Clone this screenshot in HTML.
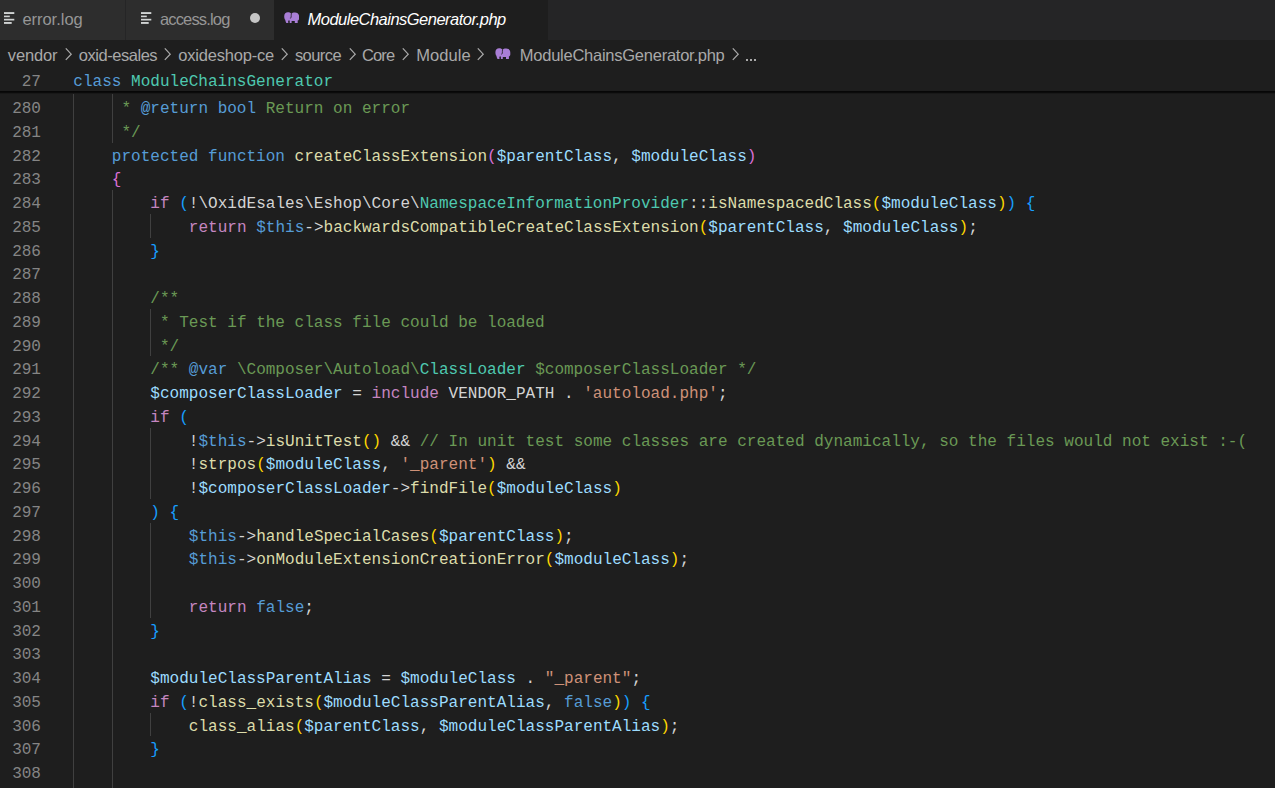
<!DOCTYPE html>
<html><head><meta charset="utf-8"><style>
html,body{margin:0;padding:0;}
body{width:1275px;height:788px;overflow:hidden;background:#1e1e1e;position:relative;font-family:"Liberation Sans",sans-serif;}
.abs{position:absolute;}
.tabbar{position:absolute;left:0;top:0;width:1275px;height:40px;background:#252526;}
.tab{position:absolute;top:0;height:40px;background:#2d2d2d;}
.tab.active{background:#1e1e1e;}
.ui{position:absolute;white-space:pre;font-size:16px;line-height:20px;}
.ic{position:absolute;display:block;}
.code{position:absolute;left:0;white-space:pre;font-family:"Liberation Mono",monospace;font-size:16.04px;height:23.75px;line-height:23.75px;}
.ln{position:absolute;left:0;width:41px;text-align:right;white-space:pre;font-family:"Liberation Mono",monospace;font-size:16.04px;height:23.75px;line-height:23.75px;color:#858585;}
.g{position:absolute;width:1px;background:#404040;}
.chev{position:absolute;}
.kw{color:#569cd6;}
.ctl{color:#c586c0;}
.cls{color:#4ec9b0;}
.fn{color:#dcdcaa;}
.var{color:#9cdcfe;}
.str{color:#ce9178;}
.cmt{color:#6a9955;}
.op{color:#d4d4d4;}
.b1{color:#ffd700;}
.b2{color:#da70d6;}
.b3{color:#179fff;}
</style></head><body>
<div class="tabbar"><div class="tab" style="left:0;width:125px"></div><div class="tab" style="left:126px;width:148px"></div><div class="tab active" style="left:274px;width:274px"></div></div><svg class="ic" style="left:3.8px;top:12px" width="11" height="12" viewBox="0 0 11 12"><rect x="0" y="0.1" width="10.3" height="1.9" fill="#d0d3d3"/><rect x="0" y="3.6" width="5.8" height="1.6" fill="#d0d3d3"/><rect x="0" y="6.8" width="10.3" height="1.7" fill="#d0d3d3"/><rect x="0" y="10.0" width="7.7" height="1.9" fill="#d0d3d3"/></svg><div class="ui" style="left:22.40px;top:9.28px;font-size:16.5px;letter-spacing:-0.027px;color:#969696;">error.log</div><svg class="ic" style="left:141px;top:12px" width="11" height="12" viewBox="0 0 11 12"><rect x="0" y="0.1" width="10.3" height="1.9" fill="#d0d3d3"/><rect x="0" y="3.6" width="5.8" height="1.6" fill="#d0d3d3"/><rect x="0" y="6.8" width="10.3" height="1.7" fill="#d0d3d3"/><rect x="0" y="10.0" width="7.7" height="1.9" fill="#d0d3d3"/></svg><div class="ui" style="left:159.90px;top:9.18px;font-size:16.5px;letter-spacing:-0.829px;color:#969696;">access.log</div><div class="abs" style="left:249.6px;top:12.9px;width:10.6px;height:10.6px;border-radius:50%;background:#c5c5c5"></div><svg class="ic" style="left:284.2px;top:11.8px" width="15.1" height="11.2" viewBox="0 0 15.1 11.2"><path fill="#a97ed6" d="M0.2 4.2 C0.2 1.8 1.8 0.3 3.8 0.3 C5.6 0.3 7 1 7.4 2 C8 1.1 9.2 0.6 11 0.6 C13.4 0.6 15.1 2 15.1 4.4 L15.1 6.6 C15.1 7.5 14.4 8.3 13.7 8.6 L13.7 11.2 L10.8 11.2 L10.8 8.9 L7.6 8.9 L7.6 11.2 L5.7 11.2 L5.7 8.6 L4.4 8.4 C4 9.2 4.2 10.2 4.4 11.2 L2.4 11.2 C1.6 10 1.4 8.8 1.2 7.8 C0.5 7 0.2 5.8 0.2 4.2 Z"/><path fill="none" stroke="#1e1e1e" stroke-width="0.8" d="M7.3 1.6 C7.1 3 7.3 4.5 7.1 5.6 C6.8 6 6.3 6.1 5.9 6.1"/></svg><div class="ui" style="left:307.60px;top:8.78px;font-size:16.5px;letter-spacing:-0.524px;color:#ffffff;font-style:italic;">ModuleChainsGenerator.php</div><div class="ui" style="left:7.80px;top:45.08px;font-size:16.5px;letter-spacing:-0.130px;color:#a9a9a9;">vendor</div><div class="ui" style="left:78.80px;top:45.08px;font-size:16.5px;letter-spacing:-0.465px;color:#a9a9a9;">oxid-esales</div><div class="ui" style="left:178.20px;top:45.08px;font-size:16.5px;letter-spacing:-0.185px;color:#a9a9a9;">oxideshop-ce</div><div class="ui" style="left:294.90px;top:45.08px;font-size:16.5px;letter-spacing:-0.568px;color:#a9a9a9;">source</div><div class="ui" style="left:362.10px;top:45.08px;font-size:16.5px;letter-spacing:-0.921px;color:#a9a9a9;">Core</div><div class="ui" style="left:416.20px;top:45.08px;font-size:16.5px;letter-spacing:0.056px;color:#a9a9a9;">Module</div><div class="ui" style="left:519.80px;top:45.08px;font-size:16.5px;letter-spacing:-0.250px;color:#a9a9a9;">ModuleChainsGenerator.php</div><svg class="ic" style="left:65.1px;top:47.9px" width="8" height="13" viewBox="0 0 8 13"><path d="M0.8 0.4 L6.2 6.15 L0.8 11.9" fill="none" stroke="#a9a9a9" stroke-width="1.25"/></svg><svg class="ic" style="left:164.3px;top:47.9px" width="8" height="13" viewBox="0 0 8 13"><path d="M0.8 0.4 L6.2 6.15 L0.8 11.9" fill="none" stroke="#a9a9a9" stroke-width="1.25"/></svg><svg class="ic" style="left:281.3px;top:47.9px" width="8" height="13" viewBox="0 0 8 13"><path d="M0.8 0.4 L6.2 6.15 L0.8 11.9" fill="none" stroke="#a9a9a9" stroke-width="1.25"/></svg><svg class="ic" style="left:348.6px;top:47.9px" width="8" height="13" viewBox="0 0 8 13"><path d="M0.8 0.4 L6.2 6.15 L0.8 11.9" fill="none" stroke="#a9a9a9" stroke-width="1.25"/></svg><svg class="ic" style="left:402.3px;top:47.9px" width="8" height="13" viewBox="0 0 8 13"><path d="M0.8 0.4 L6.2 6.15 L0.8 11.9" fill="none" stroke="#a9a9a9" stroke-width="1.25"/></svg><svg class="ic" style="left:477.4px;top:47.9px" width="8" height="13" viewBox="0 0 8 13"><path d="M0.8 0.4 L6.2 6.15 L0.8 11.9" fill="none" stroke="#a9a9a9" stroke-width="1.25"/></svg><svg class="ic" style="left:731.8px;top:47.9px" width="8" height="13" viewBox="0 0 8 13"><path d="M0.8 0.4 L6.2 6.15 L0.8 11.9" fill="none" stroke="#a9a9a9" stroke-width="1.25"/></svg><svg class="ic" style="left:495.1px;top:47.8px" width="15.5" height="11.2" viewBox="0 0 15.1 11.2"><path fill="#a97ed6" d="M0.2 4.2 C0.2 1.8 1.8 0.3 3.8 0.3 C5.6 0.3 7 1 7.4 2 C8 1.1 9.2 0.6 11 0.6 C13.4 0.6 15.1 2 15.1 4.4 L15.1 6.6 C15.1 7.5 14.4 8.3 13.7 8.6 L13.7 11.2 L10.8 11.2 L10.8 8.9 L7.6 8.9 L7.6 11.2 L5.7 11.2 L5.7 8.6 L4.4 8.4 C4 9.2 4.2 10.2 4.4 11.2 L2.4 11.2 C1.6 10 1.4 8.8 1.2 7.8 C0.5 7 0.2 5.8 0.2 4.2 Z"/><path fill="none" stroke="#1e1e1e" stroke-width="0.8" d="M7.3 1.6 C7.1 3 7.3 4.5 7.1 5.6 C6.8 6 6.3 6.1 5.9 6.1"/></svg><div class="abs" style="left:745.8px;top:58.6px;width:2.2px;height:2.2px;background:#a9a9a9"></div><div class="abs" style="left:750.05px;top:58.6px;width:2.2px;height:2.2px;background:#a9a9a9"></div><div class="abs" style="left:754.3px;top:58.6px;width:2.2px;height:2.2px;background:#a9a9a9"></div><div class="ln" style="top:74.45px">279</div><div class="ln" style="top:98.20px">280</div><div class="code" style="left:121.42px;top:98.20px"><span class="cmt">* </span><span class="kw">@return</span><span class="cmt"> </span><span class="kw">bool</span><span class="cmt"> Return on error</span></div><div class="ln" style="top:121.95px">281</div><div class="code" style="left:121.42px;top:121.95px"><span class="cmt">*/</span></div><div class="ln" style="top:145.70px">282</div><div class="code" style="left:111.80px;top:145.70px"><span class="kw">protected</span><span class="op"> </span><span class="kw">function</span><span class="op"> </span><span class="fn">createClassExtension</span><span class="b2">(</span><span class="var">$parentClass</span><span class="op">, </span><span class="var">$moduleClass</span><span class="b2">)</span></div><div class="ln" style="top:169.45px">283</div><div class="code" style="left:111.80px;top:169.45px"><span class="b2">{</span></div><div class="ln" style="top:193.20px">284</div><div class="code" style="left:150.30px;top:193.20px"><span class="ctl">if</span><span class="op"> </span><span class="b3">(</span><span class="op">!\OxidEsales\Eshop\Core\</span><span class="cls">NamespaceInformationProvider</span><span class="op">::</span><span class="fn">isNamespacedClass</span><span class="b1">(</span><span class="var">$moduleClass</span><span class="b1">)</span><span class="b3">)</span><span class="op"> </span><span class="b3">{</span></div><div class="ln" style="top:216.95px">285</div><div class="code" style="left:188.80px;top:216.95px"><span class="ctl">return</span><span class="op"> </span><span class="kw">$this</span><span class="op">-&gt;</span><span class="fn">backwardsCompatibleCreateClassExtension</span><span class="b1">(</span><span class="var">$parentClass</span><span class="op">, </span><span class="var">$moduleClass</span><span class="b1">)</span><span class="op">;</span></div><div class="ln" style="top:240.70px">286</div><div class="code" style="left:150.30px;top:240.70px"><span class="b3">}</span></div><div class="ln" style="top:264.45px">287</div><div class="ln" style="top:288.20px">288</div><div class="code" style="left:150.30px;top:288.20px"><span class="cmt">/**</span></div><div class="ln" style="top:311.95px">289</div><div class="code" style="left:159.93px;top:311.95px"><span class="cmt">* Test if the class file could be loaded</span></div><div class="ln" style="top:335.70px">290</div><div class="code" style="left:159.93px;top:335.70px"><span class="cmt">*/</span></div><div class="ln" style="top:359.45px">291</div><div class="code" style="left:150.30px;top:359.45px"><span class="cmt">/** </span><span class="kw">@var</span><span class="cmt"> \Composer\Autoload\</span><span class="cls">ClassLoader</span><span class="cmt"> $composerClassLoader */</span></div><div class="ln" style="top:383.20px">292</div><div class="code" style="left:150.30px;top:383.20px"><span class="var">$composerClassLoader</span><span class="op"> = </span><span class="ctl">include</span><span class="op"> VENDOR_PATH . </span><span class="str">&#x27;autoload.php&#x27;</span><span class="op">;</span></div><div class="ln" style="top:406.95px">293</div><div class="code" style="left:150.30px;top:406.95px"><span class="ctl">if</span><span class="op"> </span><span class="b3">(</span></div><div class="ln" style="top:430.70px">294</div><div class="code" style="left:188.80px;top:430.70px"><span class="op">!</span><span class="kw">$this</span><span class="op">-&gt;</span><span class="fn">isUnitTest</span><span class="b1">()</span><span class="op"> &amp;&amp; </span><span class="cmt">// In unit test some classes are created dynamically, so the files would not exist :-(</span></div><div class="ln" style="top:454.45px">295</div><div class="code" style="left:188.80px;top:454.45px"><span class="op">!</span><span class="fn">strpos</span><span class="b1">(</span><span class="var">$moduleClass</span><span class="op">, </span><span class="str">&#x27;_parent&#x27;</span><span class="b1">)</span><span class="op"> &amp;&amp;</span></div><div class="ln" style="top:478.20px">296</div><div class="code" style="left:188.80px;top:478.20px"><span class="op">!</span><span class="var">$composerClassLoader</span><span class="op">-&gt;</span><span class="fn">findFile</span><span class="b1">(</span><span class="var">$moduleClass</span><span class="b1">)</span></div><div class="ln" style="top:501.95px">297</div><div class="code" style="left:150.30px;top:501.95px"><span class="b3">)</span><span class="op"> </span><span class="b3">{</span></div><div class="ln" style="top:525.70px">298</div><div class="code" style="left:188.80px;top:525.70px"><span class="kw">$this</span><span class="op">-&gt;</span><span class="fn">handleSpecialCases</span><span class="b1">(</span><span class="var">$parentClass</span><span class="b1">)</span><span class="op">;</span></div><div class="ln" style="top:549.45px">299</div><div class="code" style="left:188.80px;top:549.45px"><span class="kw">$this</span><span class="op">-&gt;</span><span class="fn">onModuleExtensionCreationError</span><span class="b1">(</span><span class="var">$moduleClass</span><span class="b1">)</span><span class="op">;</span></div><div class="ln" style="top:573.20px">300</div><div class="ln" style="top:596.95px">301</div><div class="code" style="left:188.80px;top:596.95px"><span class="ctl">return</span><span class="op"> </span><span class="kw">false</span><span class="op">;</span></div><div class="ln" style="top:620.70px">302</div><div class="code" style="left:150.30px;top:620.70px"><span class="b3">}</span></div><div class="ln" style="top:644.45px">303</div><div class="ln" style="top:668.20px">304</div><div class="code" style="left:150.30px;top:668.20px"><span class="var">$moduleClassParentAlias</span><span class="op"> = </span><span class="var">$moduleClass</span><span class="op"> . </span><span class="str">&quot;_parent&quot;</span><span class="op">;</span></div><div class="ln" style="top:691.95px">305</div><div class="code" style="left:150.30px;top:691.95px"><span class="ctl">if</span><span class="op"> </span><span class="b3">(</span><span class="op">!</span><span class="fn">class_exists</span><span class="b1">(</span><span class="var">$moduleClassParentAlias</span><span class="op">, </span><span class="kw">false</span><span class="b1">)</span><span class="b3">)</span><span class="op"> </span><span class="b3">{</span></div><div class="ln" style="top:715.70px">306</div><div class="code" style="left:188.80px;top:715.70px"><span class="fn">class_alias</span><span class="b1">(</span><span class="var">$parentClass</span><span class="op">, </span><span class="var">$moduleClassParentAlias</span><span class="b1">)</span><span class="op">;</span></div><div class="ln" style="top:739.45px">307</div><div class="code" style="left:150.30px;top:739.45px"><span class="b3">}</span></div><div class="ln" style="top:763.20px">308</div><div class="g" style="left:73.30px;top:91.75px;height:696.25px"></div><div class="g" style="left:111.80px;top:91.75px;height:50.95px"></div><div class="g" style="left:111.80px;top:190.20px;height:597.80px"></div><div class="g" style="left:150.30px;top:213.95px;height:23.75px"></div><div class="g" style="left:150.30px;top:308.95px;height:47.50px"></div><div class="g" style="left:150.30px;top:427.70px;height:71.25px"></div><div class="g" style="left:150.30px;top:522.70px;height:95.00px"></div><div class="g" style="left:150.30px;top:712.70px;height:23.75px"></div><div class="abs" style="left:0;top:68px;width:1275px;height:23px;background:#1e1e1e"></div><div class="abs" style="left:0;top:91px;width:1275px;height:1px;background:#070707"></div><div class="abs" style="left:0;top:92px;width:1275px;height:1px;background:#0b0b0b"></div><div class="abs" style="left:0;top:93px;width:1275px;height:1px;background:#181818"></div><div class="ln" style="top:71.0px">27</div><div class="code" style="left:73.3px;top:71.0px"><span class="kw">class</span><span class="op"> </span><span class="cls">ModuleChainsGenerator</span></div></body></html>
